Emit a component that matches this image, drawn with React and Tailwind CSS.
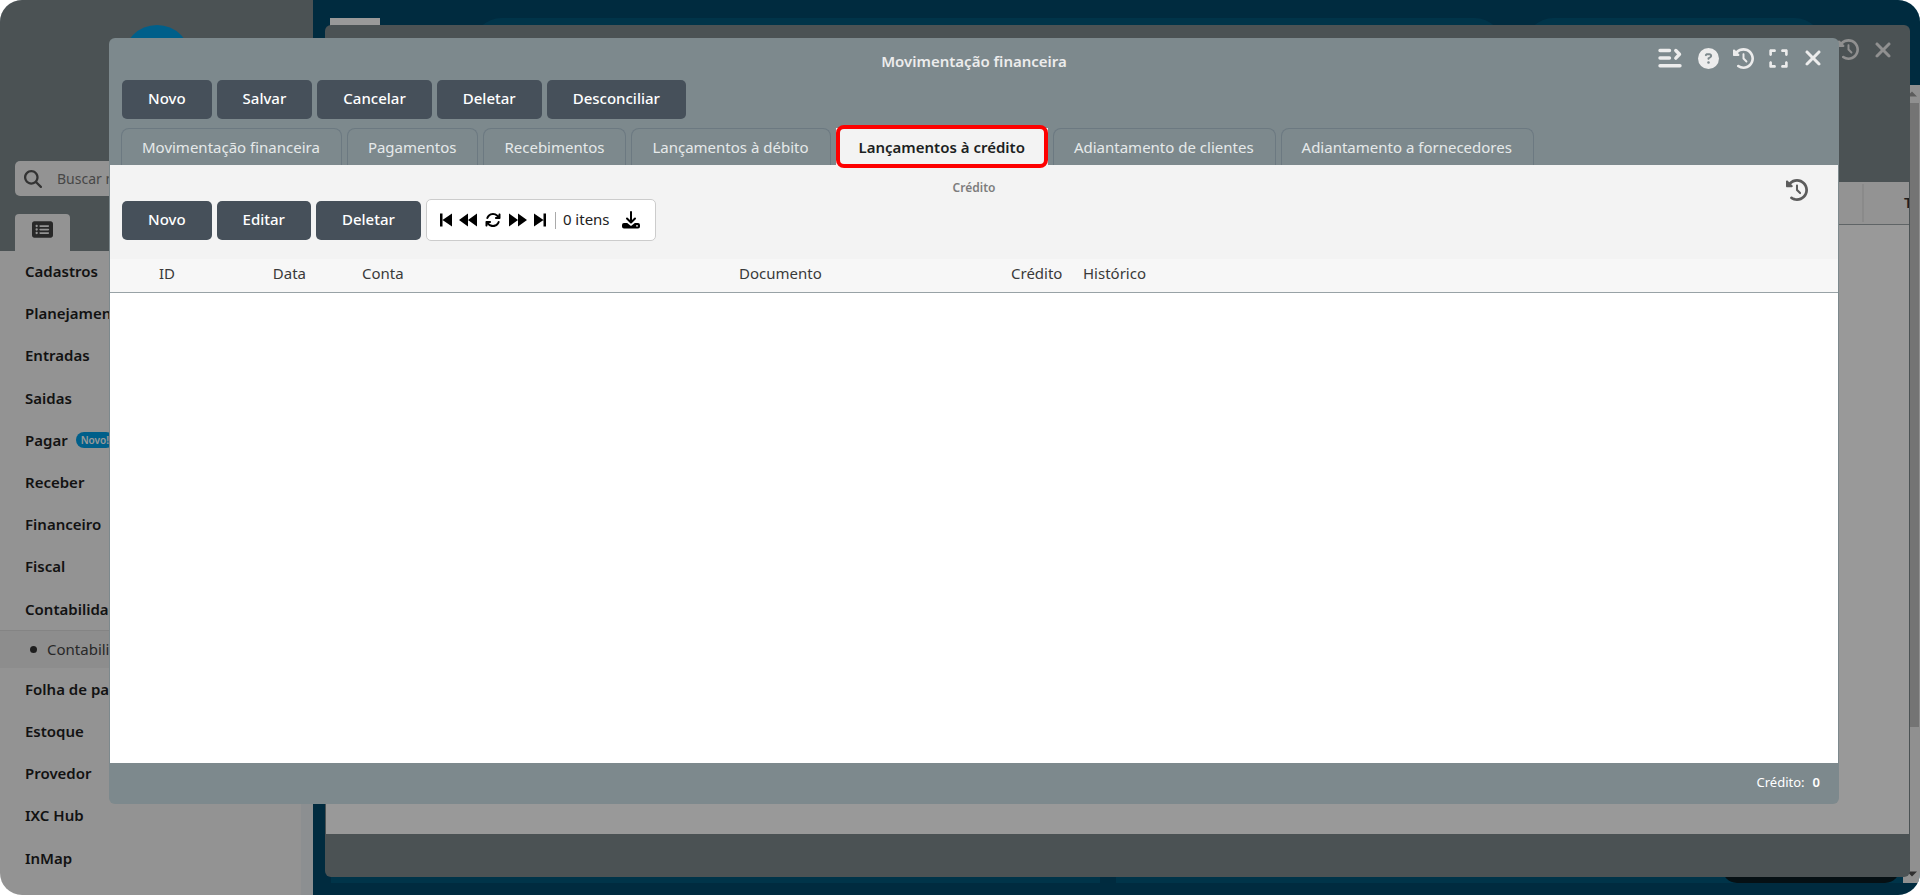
import { useState } from "react";
import {
    FaArrowsRotate, FaCircleQuestion, FaClockRotateLeft, FaExpand, FaMagnifyingGlass, FaRectangleList, FaXmark
} from "react-icons/fa6";

const menuTop = [
    "Cadastros", "Planejamento", "Entradas", "Saidas", "Pagar", "Receber", "Financeiro", "Fiscal", "Contabilidade"
];
const menuBottom = ["Folha de pagamento", "Estoque", "Provedor", "IXC Hub", "InMap"];

const tabs = [
    "Movimentação financeira", "Pagamentos", "Recebimentos", "Lançamentos à débito",
    "Lançamentos à crédito", "Adiantamento de clientes", "Adiantamento a fornecedores"
];

function ActionButton({ children }) {
    return (
        <button className="h-[39px] px-[26px] pb-[2px] rounded-[5px] bg-[#46505a] hover:bg-[#3a434c] text-white text-[15px] font-medium">
            {children}
        </button>
    );
}

function MenuItem({ label }) {
    return (
        <li className="flex-1 flex items-center pl-[25px]">
            <a href="#" className="text-[15px] font-semibold text-[#1f1f1f] whitespace-nowrap">{label}</a>
            {label === "Pagar" && (
                <span className="ml-2 px-[5px] h-4 leading-4 rounded-full bg-[#009fe6] text-white text-[10px] font-semibold">Novo!</span>
            )}
        </li>
    );
}

function Sidebar() {
    return (
        <aside className="w-[313px] shrink-0 flex flex-col bg-[#f5f5f5]">
            <div className="bg-[#7d898d] pt-[25px] pl-[15px] pr-[15px]">
                <div className="mx-auto size-[68px] rounded-full bg-[#009fe6]" />
                <label className="mt-[68px] h-[35px] flex items-center gap-[15px] px-[9px] rounded-[5px] bg-[#f5f5f5]">
                    <FaMagnifyingGlass className="size-[18px] text-[#555]" />
                    <input
                        type="text"
                        aria-label="Buscar"
                        placeholder="Buscar no menu"
                        className="flex-1 min-w-0 text-[14px] placeholder:text-[#777] outline-none"
                    />
                </label>
                <div className="mt-[18px] flex">
                    <button aria-label="Menu" className="w-[55px] h-[37px] pb-[6px] flex items-center justify-center rounded-t-[4px] bg-[#f5f5f5]">
                        <FaRectangleList className="size-[21px] text-[#444]" />
                    </button>
                </div>
            </div>

            <nav className="flex-1 flex">
                <ul className="flex-1 flex flex-col pb-4 -mt-px">
                    {menuTop.map((item) => <MenuItem key={item} label={item} />)}
                    <li className="h-[38px] flex items-center gap-[10px] pl-[30px] border-t border-[#dcdcdc] bg-[#ebebeb]">
                        <span className="size-[7px] rounded-full bg-[#333]" />
                        <a href="#" className="text-[15px] text-[#444]">Contabilidade</a>
                    </li>
                    {menuBottom.map((item) => <MenuItem key={item} label={item} />)}
                </ul>
                <div className="w-3 bg-[#e9eef2]" />
            </nav>
        </aside>
    );
}

function Desktop() {
    return (
        <main className="flex-1 flex flex-col bg-[#004869] pt-[18px] pb-[12px]">
            <div className="flex">
                <div className="ml-[17px] w-[50px] h-[67px] bg-white" />
                <div className="ml-[92px] flex-1 h-[67px] rounded-[30px] bg-[#00577b]" />
                <div className="ml-[20px] mr-[96px] w-[300px] h-[67px] rounded-[30px] bg-[#00577b]" />
            </div>
            <div className="flex-1 flex">
                <div className="flex-1 flex flex-col justify-end pl-[18px]">
                    <div className="flex h-[40px] gap-4">
                        <div className="w-[769px] bg-[#00577b]" />
                        <div className="flex-1 bg-[#00577b] flex justify-end pr-[3px]">
                            <div className="w-[178px] rounded-[15px] bg-[#0a1c22]" />
                        </div>
                    </div>
                </div>
                <div className="w-[17px] flex flex-col items-center bg-[#f1f1f1]">
                    <svg viewBox="0 0 10 5" className="w-[10px] h-[18px] text-[#999]"><path fill="currentColor" d="M0 5 5 0l5 5z" /></svg>
                    <div className="h-[624px] w-[15px] bg-[#c1c1c1]" />
                    <svg viewBox="0 0 10 5" className="mt-auto w-[10px] h-[18px] text-[#505050]"><path fill="currentColor" d="M0 0h10L5 5z" /></svg>
                </div>
            </div>
        </main>
    );
}

function BackWindow() {
    return (
        <section className="absolute left-[325px] right-[10px] top-[25px] bottom-[18px] flex flex-col rounded-[6px] bg-[#7d898d] px-px overflow-hidden">
            <header className="h-[157px] flex justify-end gap-3 pt-[13px] pr-[14px] text-[#f0f0f0]">
                <button aria-label="Histórico" className="h-[22px]"><FaClockRotateLeft className="size-[21px]" /></button>
                <button aria-label="Fechar" className="h-[22px]"><FaXmark className="size-[24px]" /></button>
            </header>
            <div className="h-[43px] flex justify-end bg-[#f5f5f5] border-b border-[#9ea7aa] text-[15px] font-semibold text-[#333]">
                <div className="w-[47px] my-[2px] flex items-center pl-[40px] pb-px border-l-2 border-[#e6e6e6] overflow-hidden">T</div>
            </div>
            <div className="flex-1 bg-white" />
            <footer className="h-[43px]" />
        </section>
    );
}

function Pager() {
    return (
        <div className="h-[42px] flex items-center px-[13px] rounded-[5px] border border-[#ccc] bg-white text-black">
            <button aria-label="Primeira página">
                <svg viewBox="0 0 12 14" className="w-3 h-[14px]" fill="currentColor"><path d="M0 .5h2.5v13H0zM12 .5v13L2.5 7z" /></svg>
            </button>
            <button aria-label="Página anterior" className="ml-[7px]">
                <svg viewBox="0 0 18 14" className="w-[18px] h-[14px]" fill="currentColor"><path d="M9 .5v13L0 7zM18 .5v13L9 7z" /></svg>
            </button>
            <button aria-label="Atualizar" className="ml-2"><FaArrowsRotate className="size-4" /></button>
            <button aria-label="Próxima página" className="ml-2">
                <svg viewBox="0 0 18 14" className="w-[18px] h-[14px]" fill="currentColor"><path d="M0 .5 9 7l-9 6.500zM9 .5 18 7l-9 6.500z" /></svg>
            </button>
            <button aria-label="Última página" className="ml-[7px]">
                <svg viewBox="0 0 12 14" className="w-3 h-[14px]" fill="currentColor"><path d="M0 .5 9.500 7 0 13.500zM9.500 .5H12v13H9.500z" /></svg>
            </button>
            <span className="ml-[9px] w-px h-[17px] bg-[#aaa]" />
            <span className="ml-[7px] pb-px text-[15px] text-[#222]">0 itens</span>
            <button aria-label="Baixar" className="ml-3 mr-[2px]">
                <svg viewBox="0 0 18 18" className="size-[18px]" fill="none" stroke="currentColor" strokeWidth="2" strokeLinecap="round" strokeLinejoin="round">
                    <path d="M9 1v10M5 7.500l4 4 4-4" />
                    <path fill="currentColor" stroke="none" d="M2 12h3.200L9 15l3.800-3H16a2 2 0 0 1 2 2v1.500a2 2 0 0 1-2 2H2a2 2 0 0 1-2-2V14a2 2 0 0 1 2-2z" />
                    <circle cx="15" cy="14.800" r=".9" fill="white" stroke="none" />
                </svg>
            </button>
        </div>
    );
}

function FinanceWindow() {
    const [activeTab, setActiveTab] = useState("Lançamentos à crédito");

    return (
        <section className="absolute left-[109px] right-[81px] top-[38px] bottom-[91px] flex flex-col rounded-[6px] bg-[#7d898d] px-px">
            <header className="h-[42px] grid grid-cols-[1fr_auto_1fr] text-[#ececec]">
                <h1 className="col-start-2 pt-[12px] text-[15px] leading-[22px] font-semibold">Movimentação financeira</h1>
                <div className="h-[22px] mt-[9px] pr-[13px] flex justify-end items-center gap-[14px]">
                    <button aria-label="Menu lateral" className="mr-[2px]">
                        <svg viewBox="0 0 24 20" className="w-6 h-5" fill="none" stroke="currentColor" strokeWidth="3.400" strokeLinecap="round" strokeLinejoin="round">
                            <path d="M2 2.500h9.500M2 10h9.500M2 17.800h20" />
                            <path d="M17.800 2.500 21.500 6.300l-3.700 3.800" />
                        </svg>
                    </button>
                    <button aria-label="Ajuda"><FaCircleQuestion className="size-[21px]" /></button>
                    <button aria-label="Histórico"><FaClockRotateLeft className="size-[21px]" /></button>
                    <button aria-label="Expandir"><FaExpand className="size-[21px]" /></button>
                    <button aria-label="Fechar" className="-ml-[2px]"><FaXmark className="size-[24px]" /></button>
                </div>
            </header>

            <div className="flex gap-[5px] px-3">
                <ActionButton>Novo</ActionButton>
                <ActionButton>Salvar</ActionButton>
                <ActionButton>Cancelar</ActionButton>
                <ActionButton>Deletar</ActionButton>
                <ActionButton>Desconciliar</ActionButton>
            </div>

            <div role="tablist" className="mt-[9px] h-[37px] flex gap-[5px] px-[11px]">
                {tabs.map((tab) => tab === activeTab ? (
                    <button key={tab} role="tab" aria-selected="true" className="relative px-[23px] pt-[2px] bg-[#f3f3f3] text-[15px] font-semibold text-[#1c1f22] whitespace-nowrap">
                        {tab}
                        <span className="absolute inset-x-0 -top-[3px] -bottom-[3px] rounded-[8px] border-4 border-[#fe0000]" />
                    </button>
                ) : (
                    <button
                        key={tab}
                        role="tab"
                        aria-selected="false"
                        onClick={() => setActiveTab(tab)}
                        className="pl-5 pr-[21px] pt-px rounded-t-[8px] border border-b-0 border-[#6c7981] text-[15px] text-[#e6e9ea] whitespace-nowrap"
                    >
                        {tab}
                    </button>
                ))}
            </div>

            <div className="bg-[#f3f3f3] px-3 pb-[18px]">
                <div className="h-[34px] grid grid-cols-[1fr_auto_1fr] items-start">
                    <h2 className="col-start-2 pt-[14px] text-[12px] leading-[18px] font-semibold text-[#7d7d7d]">Crédito</h2>
                    <button aria-label="Histórico do crédito" className="justify-self-end mt-[14px] mr-[18px] text-[#5c5c5c]">
                        <FaClockRotateLeft className="size-[22px]" />
                    </button>
                </div>
                <div className="flex items-center gap-[5px]">
                    <ActionButton>Novo</ActionButton>
                    <ActionButton>Editar</ActionButton>
                    <ActionButton>Deletar</ActionButton>
                    <Pager />
                </div>
            </div>

            <div className="flex-1 bg-white">
                <table className="w-full table-fixed text-[15px] text-[#3a3a3a]">
                    <thead>
                        <tr className="h-[33px] bg-[#f7f7f7] border-b border-[#98a2a6] text-left">
                            <th className="w-[73px] pr-2 pb-1 font-normal text-right">ID</th>
                            <th className="w-[131px] pr-2 pb-1 font-normal text-right">Data</th>
                            <th className="w-[377px] pl-12 pb-1 font-normal">Conta</th>
                            <th className="w-[272px] pl-12 pb-1 font-normal">Documento</th>
                            <th className="w-[110px] pl-12 pb-1 font-normal">Crédito</th>
                            <th className="pl-[10px] pb-1 font-normal">Histórico</th>
                        </tr>
                    </thead>
                </table>
            </div>

            <footer className="h-[41px] pb-[2px] flex items-center justify-end gap-2 pr-[18px] text-[13px] text-white">
                <span>Crédito:</span>
                <span className="font-semibold">0</span>
            </footer>
        </section>
    );
}

function App() {
    return (
        <div className="relative h-screen flex overflow-hidden rounded-[22px] font-['Noto_Sans',sans-serif]">
            <Sidebar />
            <Desktop />
            <BackWindow />
            <div className="absolute inset-0 bg-black/40" />
            <FinanceWindow />
        </div>
    );
}

export default App;
